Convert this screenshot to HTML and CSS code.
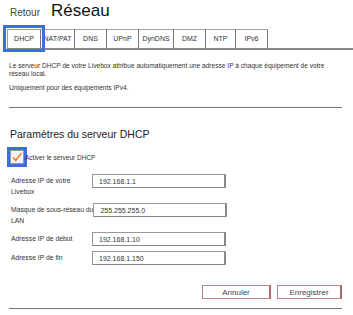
FILE: index.html
```html
<!DOCTYPE html>
<html lang="fr">
<head>
  <meta charset="UTF-8">
  <meta name="viewport" content="width=device-width, initial-scale=1.0">
  <title>Réseau</title>
  <link rel="stylesheet" href="styles.css">
</head>
<body>
<div class="header">
  <a class="back" href="#">Retour</a>
  <h1>Réseau</h1>
</div>

<div class="tabs">
  <a class="tab active" href="#">DHCP</a>
  <a class="tab w34" href="#">NAT/PAT</a>
  <a class="tab" href="#">DNS</a>
  <a class="tab" href="#">UPnP</a>
  <a class="tab w35" href="#">DynDNS</a>
  <a class="tab w32" href="#">DMZ</a>
  <a class="tab w30" href="#">NTP</a>
  <a class="tab" href="#">IPv6</a>
</div>

<div class="content">
  <p class="intro">Le serveur DHCP de votre Livebox attribue automatiquement une adresse IP à chaque équipement de votre réseau local.</p>
  <p class="intro note">Uniquement pour des équipements IPv4.</p>
  <hr>

  <h2>Paramètres du serveur DHCP</h2>

  <label class="check">
    <span class="box">
      <svg width="14" height="14" viewBox="0 0 14 14"><path d="M2.5 7.5 L5.5 11 L12 2.5" fill="none" stroke="#f07a22" stroke-width="1.8"/></svg>
    </span>
    Activer le serveur DHCP
  </label>

  <div class="fields">
    <div class="field">
      <span class="lbl">Adresse IP de votre<br>Livebox</span>
      <input type="text" value="192.168.1.1">
    </div>
    <div class="field">
      <span class="lbl">Masque de sous-réseau du<br>LAN</span>
      <input type="text" value="255.255.255.0">
    </div>
    <div class="field">
      <span class="lbl">Adresse IP de début</span>
      <input type="text" value="192.168.1.10">
    </div>
    <div class="field tight">
      <span class="lbl">Adresse IP de fin</span>
      <input type="text" value="192.168.1.150">
    </div>
  </div>

  <div class="actions">
    <button type="button">Annuler</button>
    <button type="button" class="save">Enregistrer</button>
  </div>
  <hr class="bottom">
</div>
</body>
</html>
```

FILE: styles.css
```css
body {
  margin: 0;
  font-family: "Liberation Sans", Arial, sans-serif;
  color: #333;
  background: #fff;
}

.header {
  display: flex;
  align-items: baseline;
  padding: 1px 0 0 10px;
  height: 26px;
}

.back {
  font-size: 10px;
  color: #444;
  text-decoration: none;
  margin-right: 11px;
}

h1 {
  margin: 0;
  font-size: 17px;
  font-weight: normal;
  color: #111;
}

.tabs {
  display: flex;
  margin: 2px 0 0 7px;
  border-bottom: 2px solid #8a8a8a;
}

.tab {
  width: 31px;
  height: 18px;
  line-height: 18px;
  text-align: center;
  font-size: 7px;
  color: #333;
  text-decoration: none;
  border: 1px solid #a0a0a0;
  border-right: 1px solid #777;
  border-bottom: none;
}

.tab + .tab {
  border-left: none;
}

.tab.active {
  width: 32px;
  outline: 3px solid #3d6fd9;
  outline-offset: 1px;
  position: relative;
}

.w30 { width: 29px; }
.w32 { width: 31px; }
.w34 { width: 33px; }
.w35 { width: 34px; }

.content {
  padding: 0 11px 0 9px;
}

.intro {
  margin: 12px 0 0;
  font-size: 6.6px;
  line-height: 8px;
}

.intro.note {
  margin-top: 6px;
}

hr {
  margin: 15px 0 0;
  border: none;
  border-top: 1px solid #777;
}

h2 {
  margin: 20px 0 0 1px;
  font-size: 10.5px;
  font-weight: normal;
  color: #222;
}

.check {
  display: flex;
  align-items: center;
  margin: 7px 0 0 -2px;
  font-size: 6.5px;
  color: #333;
}

.box {
  display: flex;
  align-items: center;
  justify-content: center;
  width: 12px;
  height: 12px;
  border: 1px solid #999;
  outline: 3px solid #3d6fd9;
  margin: 3px 1px 3px 3px;
  background: #f4f4f4;
}

.fields {
  display: flex;
  flex-direction: column;
  gap: 6px;
  margin-top: 7px;
}

.field {
  display: flex;
  align-items: flex-start;
  padding-left: 2px;
}

.field.tight {
  margin-top: -1px;
}

.lbl {
  flex: 0 0 81px;
  white-space: nowrap;
  font-size: 6.8px;
  line-height: 11px;
  padding-top: 1px;
}

.field input {
  width: 125px;
  height: 12px;
  margin: 0;
  padding: 0 0 0 6px;
  font-family: "Liberation Sans", Arial, sans-serif;
  font-size: 7px;
  color: #333;
  border: 1px solid #999;
  border-right: 2px solid #888;
  border-bottom: 1px solid #888;
  border-radius: 0;
}

.actions {
  display: flex;
  justify-content: flex-end;
  gap: 6px;
  margin-top: 20px;
}

.actions button {
  width: 69px;
  height: 14px;
  padding: 0;
  font-family: "Liberation Sans", Arial, sans-serif;
  font-size: 8px;
  color: #444;
  background: #fff;
  border: 1px solid #b88484;
  border-right: 2px solid #a86a6a;
  border-radius: 0;
}

.actions .save {
  width: 65px;
}

hr.bottom {
  margin-top: 9px;
}
```
